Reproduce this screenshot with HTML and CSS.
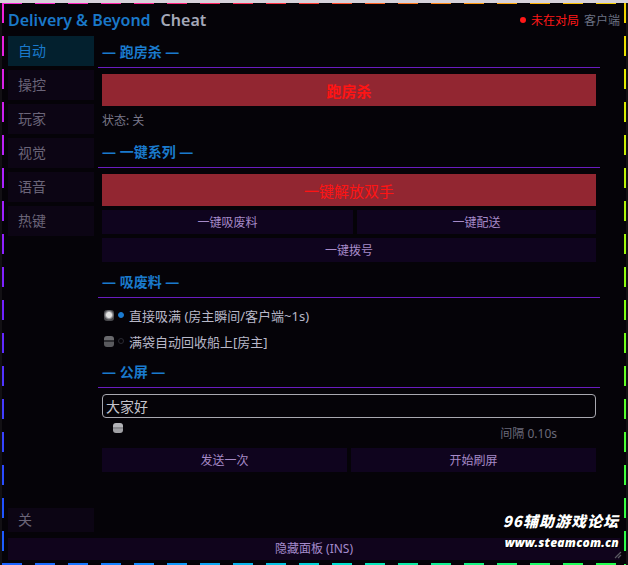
FILE: index.html
```html
<!DOCTYPE html>
<html lang="zh-CN">
<head>
  <meta charset="UTF-8">
  <title>Delivery & Beyond Cheat</title>
  <link rel="stylesheet" href="styles.css">
</head>
<body>
  <div class="window">
    <div class="titlebar">
      <span class="title">Delivery &amp; Beyond</span>
      <span class="subtitle">Cheat</span>
      <span class="status"><span class="dot"></span>未在对局</span>
      <span class="mode">客户端</span>
    </div>
    <div class="layout">
      <nav class="sidebar">
        <div class="tab active">自动</div>
        <div class="tab">操控</div>
        <div class="tab">玩家</div>
        <div class="tab">视觉</div>
        <div class="tab">语音</div>
        <div class="tab">热键</div>
        <div class="tab tab-off">关</div>
      </nav>
      <main class="content">
        <div class="sec-head first">— 跑房杀 —</div>
        <button class="btn btn-red strong">跑房杀</button>
        <div class="note">状态: 关</div>

        <div class="sec-head">— 一键系列 —</div>
        <button class="btn btn-red">一键解放双手</button>
        <div class="btn-row uneven">
          <button class="btn">一键吸废料</button>
          <button class="btn">一键配送</button>
        </div>
        <button class="btn spaced">一键拨号</button>

        <div class="sec-head near">— 吸废料 —</div>
        <div class="check">
          <span class="box on"></span><span class="radio on"></span>
          <span>直接吸满 (房主瞬间/客户端~1s)</span>
        </div>
        <div class="check">
          <span class="box"></span><span class="radio"></span>
          <span>满袋自动回收船上[房主]</span>
        </div>

        <div class="sec-head near">— 公屏 —</div>
        <input class="msg" type="text" value="大家好">
        <div class="slider">
          <span class="thumb"></span>
          <span class="slider-label">间隔 0.10s</span>
        </div>
        <div class="btn-row">
          <button class="btn">发送一次</button>
          <button class="btn">开始刷屏</button>
        </div>
      </main>
    </div>
    <div class="hide-bar">隐藏面板 (INS)</div>

    <div class="frame"></div>
    <div class="watermark">
      <div class="wm-name">96辅助游戏论坛</div>
      <div class="wm-url">www.steamcom.cn</div>
    </div>
    <svg class="grip" width="8" height="8" viewBox="0 0 8 8">
      <path d="M7 1 L1 7 M7 4 L4 7" stroke="#5a5a62" stroke-width="1.2"/>
    </svg>
  </div>
</body>
</html>
```

FILE: styles.css
```css
body { margin: 0; background: linear-gradient(#d6d2da 0 3px, #121014 3px); font-family: "Noto Sans", "Noto Sans CJK SC", sans-serif; }
.window { position: relative; box-sizing: border-box; height: 562px; margin: 3px 2px 0; padding: 0 6px 5px; background: #050308; display: flex; flex-direction: column; }

/* rainbow dashed outline */
.frame { position: absolute; inset: 0; pointer-events: none;
  background: conic-gradient(from 0deg, #ff3a30 0deg, #ffb400 40deg, #e8e800 55deg, #80ff10 95deg, #20ff50 135deg, #00e0d0 175deg, #1090ff 210deg, #2050ff 235deg, #7020ff 265deg, #b020ff 290deg, #ff20d0 315deg, #ff2060 340deg, #ff3a30 360deg);
  -webkit-mask: repeating-linear-gradient(90deg, #000 0 20px, transparent 20px 33px) top / 100% 1px no-repeat,
                repeating-linear-gradient(90deg, #000 0 20px, transparent 20px 33px) bottom / 100% 2px no-repeat,
                repeating-linear-gradient(180deg, #000 0 20px, transparent 20px 33px) left / 2px 100% no-repeat,
                repeating-linear-gradient(180deg, #000 0 20px, transparent 20px 33px) right / 2px 100% no-repeat;
  mask: repeating-linear-gradient(90deg, #000 0 20px, transparent 20px 33px) top / 100% 1px no-repeat,
        repeating-linear-gradient(90deg, #000 0 20px, transparent 20px 33px) bottom / 100% 2px no-repeat,
        repeating-linear-gradient(180deg, #000 0 20px, transparent 20px 33px) left / 2px 100% no-repeat,
        repeating-linear-gradient(180deg, #000 0 20px, transparent 20px 33px) right / 2px 100% no-repeat; }

.titlebar { height: 33px; display: flex; align-items: center; flex-shrink: 0; }
.title { font-size: 16px; font-weight: 600; color: #1a78c8; }
.subtitle { font-size: 16px; font-weight: 600; color: #a4a8b8; margin-left: 10px; }
.status { margin-left: auto; font-size: 12px; color: #ff1818; display: flex; align-items: center; }
.dot { width: 6px; height: 6px; border-radius: 50%; background: #ff1818; margin-right: 5px; }
.mode { margin-left: 5px; font-size: 12px; color: #6c7284; }

.layout { flex: 1; display: flex; gap: 4px; min-height: 0; }
.sidebar { width: 86px; display: flex; flex-direction: column; gap: 4px; }
.tab { height: 30px; line-height: 30px; padding-left: 10px; background: #0c0514; color: #6a6478; font-size: 14px; }
.tab.active { background: #03202e; color: #1a7acc; }
.tab-off { margin-top: auto; height: 24px; line-height: 24px; }

.content { flex: 1; padding: 0 24px 0 4px; }
.sec-head { margin: 14px -4px 6px; padding: 0 4px 5px; line-height: 20px; font-size: 14px; font-weight: 700; color: #1a7acc; border-bottom: 1px solid #6a1cc0; }
.sec-head.first { margin-top: 6px; }
.sec-head.near { margin-top: 10px; }

.btn { display: block; width: 100%; height: 24px; border: 0; padding: 0; background: #0f041e; color: #a68ac8; font-family: inherit; font-size: 12px; }
.btn-red { height: 32px; background: #922631; color: #ff1414; font-size: 15px; }
.btn-red.strong { font-weight: 700; }
.btn.spaced { margin-top: 4px; }
.btn-row { display: grid; grid-template-columns: 1fr 1fr; gap: 4px; margin-top: 4px; }
.btn-row.uneven { grid-template-columns: 251px 1fr; }
.note { margin-top: 8px; line-height: 14px; font-size: 12px; color: #7a7888; }

.check { height: 22px; margin-top: 4px; display: flex; align-items: center; font-size: 13px; color: #b8b8c8; }
.box { width: 10px; height: 11px; margin-left: 2px; border-radius: 3px; box-sizing: border-box; }
.box.on { background: radial-gradient(circle at 50% 45%, #e0e0e0 0 2.5px, #9a9a9e 3.5px, #4a4a4e 5px); }
.box:not(.on) { background: linear-gradient(#6a6a6e 0 4px, #2e2e32 4px 6px, #5a5a5e 6px); }
.radio { width: 6px; height: 6px; margin: 0 5px 0 4px; border-radius: 50%; box-sizing: border-box; border: 1px solid #2a2a32; }
.radio.on { background: #1a7ad0; border-color: #1a7ad0; }

.msg { display: block; box-sizing: border-box; width: 100%; height: 24px; margin-top: 1px; padding: 0 3px; border: 1px solid #a8a8b0; border-radius: 4px; background: transparent; color: #c4c4cc; font-family: inherit; font-size: 14px; }
.slider { height: 22px; margin-top: 4px; display: flex; justify-content: space-between; }
.thumb { width: 10px; height: 10px; margin: 1px 0 0 11px; border-radius: 3px; background: linear-gradient(#b4b4b8 0 4px, #8a8a8e 4px 6px, #a0a0a4 6px); }
.slider-label { align-self: flex-end; margin: 0 39px 2px 0; line-height: 16px; font-size: 12px; color: #6a6a7a; }

.hide-bar { flex-shrink: 0; height: 22px; line-height: 22px; margin-top: 6px; text-align: center; background: #10041c; color: #a48acc; font-size: 12px; }

.watermark { position: absolute; top: 507px; right: 7px; text-align: right; line-height: 22px; color: #fff; font-style: italic; font-weight: 900; text-shadow: 1px 1px 0 #000, -1px 0 0 #000; pointer-events: none; }
.wm-name { font-family: "Noto Sans CJK SC", sans-serif; font-size: 15px; letter-spacing: 1px; }
.wm-url { font-family: "Noto Sans", sans-serif; font-size: 12px; letter-spacing: 0.2px; }
.grip { position: absolute; right: 4px; bottom: 6px; }
```
